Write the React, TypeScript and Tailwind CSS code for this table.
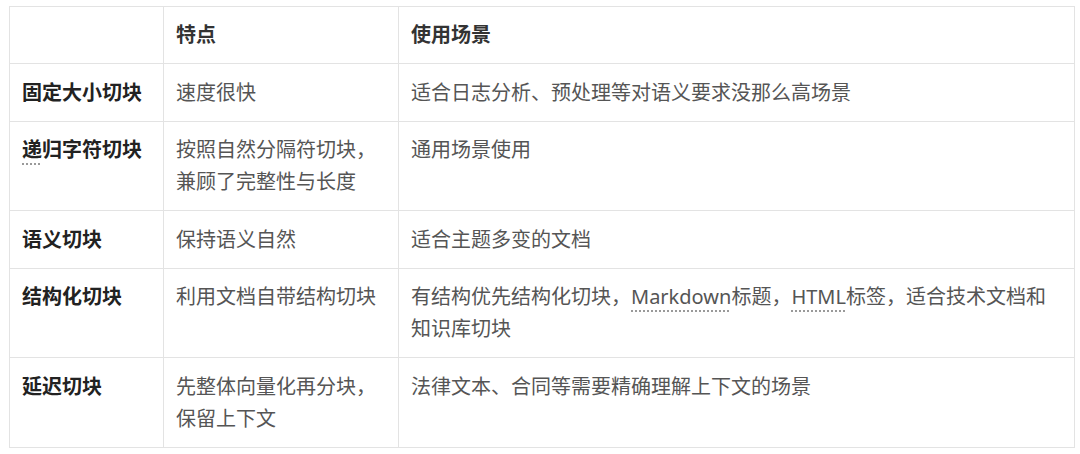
import React from "react";

const Dot = ({ children }: { children: React.ReactNode }) => (
  <span className="underline decoration-dotted decoration-[#9a9a9a] underline-offset-[6px]">{children}</span>
);

const rows: { a: React.ReactNode; b: React.ReactNode; c: React.ReactNode }[] = [
  { a: "固定大小切块", b: "速度很快", c: "适合日志分析、预处理等对语义要求没那么高场景" },
  {
    a: (
      <>
        <Dot>递</Dot>归字符切块
      </>
    ),
    b: (
      <>
        按照自然分隔符切块，
        <br />
        兼顾了完整性与长度
      </>
    ),
    c: "通用场景使用",
  },
  { a: "语义切块", b: "保持语义自然", c: "适合主题多变的文档" },
  {
    a: "结构化切块",
    b: "利用文档自带结构切块",
    c: (
      <>
        有结构优先结构化切块，<Dot>Markdown</Dot>标题，<Dot>HTML</Dot>标签，适合技术文档和
        <br />
        知识库切块
      </>
    ),
  },
  {
    a: "延迟切块",
    b: (
      <>
        先整体向量化再分块，
        <br />
        保留上下文
      </>
    ),
    c: "法律文本、合同等需要精确理解上下文的场景",
  },
];

export default function App() {
  return (
    <div
      className="w-[1080px] h-[454px] bg-white pl-[9px] pt-[6px]"
      style={{ fontFamily: '"Noto Sans", "Noto Sans CJK SC", sans-serif' }}
    >
      <table className="border-collapse text-[20px] leading-[32px] w-[1066px] table-fixed">
        <colgroup>
          <col className="w-[154px]" />
          <col className="w-[235px]" />
          <col />
        </colgroup>
        <thead>
          <tr className="h-[57px]">
            <th className="border border-[#e3e3e3] px-[12px] py-[11px] text-left align-middle font-bold text-[#333]" />
            <th className="border border-[#e3e3e3] px-[12px] py-[11px] text-left align-middle font-bold text-[#333]">特点</th>
            <th className="border border-[#e3e3e3] px-[12px] py-[11px] text-left align-middle font-bold text-[#333]">使用场景</th>
          </tr>
        </thead>
        <tbody>
          {rows.map((r, i) => (
            <tr key={i}>
              <td className="border border-[#e3e3e3] px-[12px] pt-[12.5px] pb-[12px] align-top font-bold text-[#222]">{r.a}</td>
              <td className="border border-[#e3e3e3] px-[12px] pt-[12.5px] pb-[12px] align-top text-[#555]">{r.b}</td>
              <td className="border border-[#e3e3e3] px-[12px] pt-[12.5px] pb-[12px] align-top text-[#555]">{r.c}</td>
            </tr>
          ))}
        </tbody>
      </table>
    </div>
  );
}
